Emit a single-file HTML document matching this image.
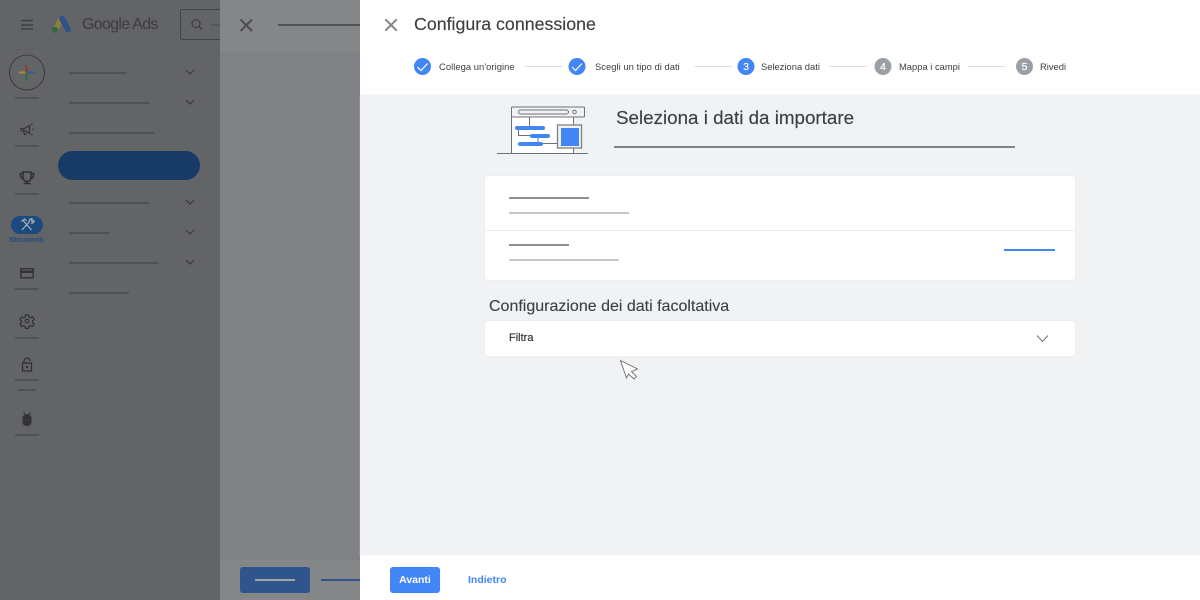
<!DOCTYPE html>
<html><head><meta charset="utf-8"><style>
html,body{margin:0;padding:0}
body{width:1200px;height:600px;position:relative;overflow:hidden;background:#636466;font-family:"Liberation Sans",sans-serif}
.a{position:absolute}
.t{position:absolute;white-space:nowrap;line-height:1}
.l{position:absolute;height:2px}
.d{background:#505154}
svg{position:absolute;overflow:visible}
</style></head><body>
<!-- left background -->
<div class="a" style="left:0;top:0;width:220px;height:50px;background:#636467"></div>
<div class="a" style="left:0;top:49px;width:220px;height:1px;background:#5f6062"></div>
<div class="a" style="left:54px;top:50px;width:1px;height:550px;background:#606163"></div>
<svg style="left:0;top:0" width="220" height="50" fill="none">
<path d="M21 20.500h12M21 25h12M21 29h12" stroke="#3f4043" stroke-width="1.400"/>
<path d="M55.500 29.500L61 19.500" stroke="#8f7f3a" stroke-width="5.500" stroke-linecap="round"/>
<path d="M62 18.500L68 29.500" stroke="#2f5287" stroke-width="6" stroke-linecap="round"/>
<circle cx="55" cy="29.800" r="3" fill="#2d6b40"/>
<rect x="180.500" y="9.500" width="45" height="30" rx="2" stroke="#444548"/>
<circle cx="196" cy="23.500" r="4" stroke="#3f4043" stroke-width="1.300"/>
<path d="M199 26.500l3 3" stroke="#3f4043" stroke-width="1.300"/>
<path d="M211 25h10" stroke="#505154" stroke-width="1.500"/>
</svg>
<div class="t" style="left:82px;top:17px;font-size:16px;color:#3b3c3f;letter-spacing:-.7px">Google Ads</div>
<!-- rail -->
<svg style="left:0;top:50px" width="54" height="400" fill="none">
<circle cx="27" cy="22.500" r="17.500" stroke="#3a3b3d"/>
<path d="M19 22.500h8" stroke="#a98f2c" stroke-width="2"/>
<path d="M27 22.500h8" stroke="#2f5b96" stroke-width="2"/>
<path d="M26.500 15v7.500" stroke="#8e3a33" stroke-width="2"/>
<path d="M26.500 22.500v8" stroke="#2d6b40" stroke-width="2"/>
<!-- megaphone -->
<path d="M21 78.500h3.500l5-3v8l-5-3H21zM23.500 81l1 3.500h2" stroke="#353639" stroke-width="1.300"/>
<path d="M31 75l1.500-1.500M31 84l1.500 1.500M32 79.500h1.500" stroke="#353639" stroke-width="1.200"/>
<!-- trophy -->
<path d="M23 122h8v5.500a4 4 0 0 1-8 0zM23 123.500h-2.500v2a3 3 0 0 0 2.800 3M31 123.500h2.500v2a3 3 0 0 1-2.800 3M27 131.500v2.500M23.500 133.500h7" stroke="#2f3033" stroke-width="1.500"/>
<!-- card -->
<rect x="20.800" y="218.800" width="12.400" height="9" stroke="#303134" stroke-width="1.400"/>
<path d="M21 221.800h12" stroke="#303134" stroke-width="2.400"/>
<!-- gear -->
<path d="M25.500 265h3l.5 2 1.700.8 1.900-1 1.500 2.600-1.500 1.400v1.800l1.500 1.400-1.500 2.600-1.900-1-1.700.8-.5 2h-3l-.5-2-1.700-.8-1.900 1-1.500-2.600 1.500-1.400v-1.800l-1.500-1.400 1.500-2.600 1.900 1 1.700-.8z" stroke="#303134" stroke-width="1.200"/>
<circle cx="27" cy="271" r="1.800" stroke="#303134" stroke-width="1.100"/>
<!-- lock -->
<rect x="22.500" y="313" width="9" height="8" stroke="#303134" stroke-width="1.300"/>
<path d="M24 313v-2a3 3 0 0 1 6 0" stroke="#303134" stroke-width="1.300"/>
<rect x="26" y="316" width="2" height="2" fill="#303134"/>
<!-- android -->
<path d="M22.500 368.500a4.500 4.500 0 0 1 9 0v4a4.500 3.500 0 0 1-9 0z" fill="#303134"/>
<path d="M23.500 362l1.500 2.500M30.500 362l-1.500 2.500" stroke="#303134"/>
<path d="M22.500 370h9" stroke="#45464a" stroke-width=".6"/>
<!-- tools pill -->
<rect x="11" y="166" width="32" height="18" rx="9" fill="#1c4a80"/>
<path d="M22 180l8-9M31.500 180l-8-9M21.500 171.500l3-2.500 2 2M29 171a2.500 2.500 0 0 1 3.500-2l-1 1.500 1 1 1.500-.8a2.500 2.500 0 0 1-3 2.500" stroke="#aeb3ba" stroke-width="1.200"/>
</svg>
<div class="t" style="left:9px;top:236px;font-size:7.500px;color:#1f4d85;font-weight:bold">Strumenti</div>
<div class="l d" style="left:15px;top:97px;width:24px"></div>
<div class="l d" style="left:15px;top:145px;width:24px"></div>
<div class="l d" style="left:15px;top:193px;width:24px"></div>
<div class="l d" style="left:15px;top:288px;width:24px"></div>
<div class="l d" style="left:15px;top:337px;width:24px"></div>
<div class="l d" style="left:15px;top:379px;width:24px"></div>
<div class="l d" style="left:18px;top:389px;width:18px"></div>
<div class="l d" style="left:15px;top:434px;width:24px"></div>
<!-- nav -->
<div class="l d" style="left:69px;top:72px;width:58px"></div>
<div class="l d" style="left:69px;top:102px;width:80px"></div>
<div class="l d" style="left:69px;top:132px;width:85px"></div>
<div class="a" style="left:58px;top:151px;width:142px;height:29px;border-radius:15px;background:#183a66"></div>
<div class="l d" style="left:69px;top:202px;width:80px"></div>
<div class="l d" style="left:69px;top:232px;width:40px"></div>
<div class="l d" style="left:69px;top:262px;width:90px"></div>
<div class="l d" style="left:69px;top:292px;width:60px"></div>
<svg style="left:0;top:0" width="220" height="300" fill="none" stroke="#37383b" stroke-width="1.200">
<path d="M186 70l4 4 4-4M186 100l4 4 4-4M186 200l4 4 4-4M186 230l4 4 4-4M186 260l4 4 4-4"/>
</svg>
<!-- middle panel -->
<div class="a" style="left:220px;top:0;width:140px;height:600px;background:#808184"></div>
<div class="a" style="left:220px;top:0;width:140px;height:52px;background:#858688"></div>
<div class="a" style="left:220px;top:560px;width:140px;height:40px;background:#858688"></div>
<svg style="left:220px;top:0" width="140" height="50" fill="none"><path d="M20.500 19.500l11.500 11.500M32 19.500l-11.500 11.500" stroke="#4c4d50" stroke-width="2"/></svg>
<div class="l" style="left:278px;top:24px;width:82px;background:#525356"></div>
<div class="a" style="left:240px;top:567px;width:70px;height:26px;border-radius:3px;background:#30548c"></div>
<div class="l" style="left:255px;top:579px;width:40px;background:#a0a4ab"></div>
<div class="l" style="left:321px;top:579px;width:39px;background:#30548c"></div>
<!-- right panel -->
<div class="a" style="left:360px;top:0;width:840px;height:600px;background:#fff"></div>
<div class="a" style="left:360px;top:95px;width:840px;height:460px;background:#f1f2f4;box-shadow:0 0 1px #ddd"></div>
<svg style="left:360px;top:0" width="50" height="50" fill="none"><path d="M25.300 19.300l11.400 11.400M36.700 19.300l-11.400 11.400" stroke="#80868b" stroke-width="2"/></svg>
<div class="t" style="left:414px;top:16px;font-size:17.800px;color:#3c4043;-webkit-text-stroke:.15px #3c4043">Configura connessione</div>
<!-- stepper -->
<svg style="left:0;top:0" width="1200" height="95" fill="none">
<circle cx="422.500" cy="66.500" r="8.500" fill="#4285f4"/><path d="M417.500 67l3.500 3.500 6.500-7" stroke="#fff" stroke-width="1.200"/>
<circle cx="577" cy="66.500" r="8.500" fill="#4285f4"/><path d="M572 67l3.500 3.500 6.500-7" stroke="#fff" stroke-width="1.200"/>
<circle cx="746" cy="66.500" r="8.500" fill="#4285f4"/>
<circle cx="883" cy="66.500" r="8.500" fill="#9aa0a6"/>
<circle cx="1024.500" cy="66.500" r="8.500" fill="#9aa0a6"/>
<path d="M525 66.500h37M694.500 66.500h37M829.500 66.500h37M968 66.500h37" stroke="#dadce0"/>
</svg>
<div class="t" style="left:746px;top:62px;font-size:10.500px;color:#fff;width:0;display:flex;justify-content:center;-webkit-text-stroke:.2px #fff">3</div>
<div class="t" style="left:883px;top:62px;font-size:10.500px;color:#fff;width:0;display:flex;justify-content:center;-webkit-text-stroke:.2px #fff">4</div>
<div class="t" style="left:1024.500px;top:62px;font-size:10.500px;color:#fff;width:0;display:flex;justify-content:center;-webkit-text-stroke:.2px #fff">5</div>
<div class="t" style="left:439px;top:62px;font-size:9.400px;color:#3c4043;letter-spacing:.05px">Collega un'origine</div>
<div class="t" style="left:595px;top:62px;font-size:9.400px;color:#3c4043;letter-spacing:.04px">Scegli un tipo di dati</div>
<div class="t" style="left:761px;top:62px;font-size:9.400px;color:#3c4043">Seleziona dati</div>
<div class="t" style="left:899px;top:62px;font-size:9.400px;color:#3c4043">Mappa i campi</div>
<div class="t" style="left:1040px;top:62px;font-size:9.400px;color:#3c4043">Rivedi</div>
<!-- illustration -->
<svg style="left:490px;top:98px" width="110" height="62" fill="none">
<rect x="22" y="19" width="62" height="36" fill="#fff"/>
<path d="M21.500 18v37M83.500 18v37M7 55.500h91" stroke="#6f7276" stroke-width="1"/>
<rect x="21.500" y="9" width="73" height="10" rx="1" fill="#f1f2f4" stroke="#6f7276"/>
<rect x="28.500" y="12" width="50" height="4" rx="2" stroke="#6f7276"/>
<circle cx="84.500" cy="14" r="1.800" stroke="#6f7276"/>
<path d="M39.500 19v9M28.500 32v5.500h12M48 40v4M53 45.500h15" stroke="#6f7276"/>
<rect x="25" y="28" width="30" height="4" rx="2" fill="#4285f4"/>
<rect x="40" y="36" width="20" height="4" rx="2" fill="#4285f4"/>
<rect x="28" y="44" width="25" height="4" rx="2" fill="#4285f4"/>
<rect x="67.500" y="27" width="24" height="23" fill="#f1f2f4" stroke="#7d8084" stroke-width="1.300"/>
<rect x="71" y="30" width="18" height="18" fill="#4285f4"/>
</svg>
<div class="t" style="left:616px;top:109px;font-size:18.800px;color:#3c4043;-webkit-text-stroke:.15px #3c4043">Seleziona i dati da importare</div>
<div class="l" style="left:614px;top:146px;width:401px;background:#808387"></div>
<!-- card 1 -->
<div class="a" style="left:485px;top:176px;width:590px;height:104px;background:#fff;border-radius:3px;box-shadow:0 0 1px rgba(0,0,0,.13)"></div>
<div class="a" style="left:485px;top:230px;width:590px;height:1px;background:#e8eaed"></div>
<div class="l" style="left:509px;top:197px;width:80px;background:#8d9196"></div>
<div class="l" style="left:509px;top:212px;width:120px;background:#c4c7cb"></div>
<div class="l" style="left:509px;top:244px;width:60px;background:#8d9196"></div>
<div class="l" style="left:509px;top:259px;width:110px;background:#c4c7cb"></div>
<div class="l" style="left:1004px;top:249px;width:51px;background:#4285f4"></div>
<div class="t" style="left:489px;top:299px;font-size:16px;color:#3c4043;-webkit-text-stroke:.12px #3c4043">Configurazione dei dati facoltativa</div>
<div class="a" style="left:485px;top:321px;width:590px;height:35px;background:#fff;border-radius:3px;box-shadow:0 0 1px rgba(0,0,0,.13)"></div>
<div class="t" style="left:509px;top:333px;font-size:11px;color:#3c4043;-webkit-text-stroke:.25px #3c4043">Filtra</div>
<svg style="left:0;top:0" width="1200" height="600" fill="none">
<path d="M1037 335.500l5.500 6 5.500-6" stroke="#70757a" stroke-width="1"/>
<path d="M620.500 360.500L637.500 369L631.500 371.500L636.500 376.500L634 379L628.500 374L626.500 378Z" fill="#fff" stroke="#6b6e72" stroke-width=".9"/>
</svg>
<!-- footer -->
<div class="a" style="left:390px;top:567px;width:50px;height:26px;border-radius:3px;background:#4285f4"></div>
<div class="t" style="left:390px;top:574.500px;width:50px;text-align:center;font-size:10.500px;font-weight:bold;color:#fff">Avanti</div>
<div class="t" style="left:468px;top:574.500px;font-size:10.500px;font-weight:bold;color:#4285f4">Indietro</div>
</body></html>
